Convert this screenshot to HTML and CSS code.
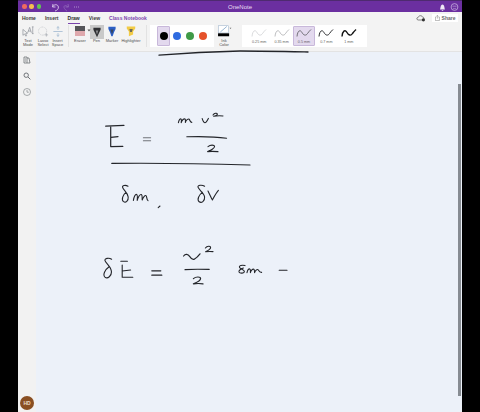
FILE: index.html
```html
<!DOCTYPE html>
<html lang="en">
<head>
  <meta charset="UTF-8" />
  <title>OneNote</title>
  <link rel="stylesheet" href="styles.css">
</head>
<body>
  <div class="window">
    <div class="titlebar">
      <div class="lights"><i class="red"></i><i class="yellow"></i><i class="green"></i></div>
      <svg class="undo" width="30" height="10" viewBox="0 0 30 10" fill="none" stroke="#d9c8ea" stroke-width="0.9">
        <path d="M3 2 L2.5 5 L5.5 5 M2.7 4.8 C4 2 8 2 8.4 5 C8.6 7 7 8.5 5 9"/>
        <path d="M18 5 C16 3 13.6 3.4 14 5.4 C14.4 7 16 8.4 17 9 M18 2 L18.5 5 L15.6 5" stroke="#8d63b8"/>
        <path d="M24 5 h1 M26 5 h1 M28 5 h1" stroke="#b79ad3"/>
      </svg>
      <div class="app-name">OneNote</div>
      <svg class="title-icons" width="24" height="10" viewBox="0 0 24 10">
        <path d="M3 7.5 C3.6 6.6 3.4 2.5 5.5 2.5 C7.6 2.5 7.4 6.6 8 7.5 Z M4.8 8 h1.4 v0.8 h-1.4 Z" fill="#eee6f5"/>
        <circle cx="17.5" cy="5" r="3.4" fill="none" stroke="#c7aee0" stroke-width="0.8"/>
        <path d="M15.5 4.2 h4 M16 6 C16.6 6.8 18.4 6.8 19 6" fill="none" stroke="#c7aee0" stroke-width="0.6"/>
      </svg>
    </div>

    <div class="ribbon">
      <div class="tabs">
        <span class="tab">Home</span>
        <span class="tab">Insert</span>
        <span class="tab active">Draw</span>
        <span class="tab">View</span>
        <span class="tab notebook">Class Notebook</span>
        <svg class="cloud" width="10" height="8" viewBox="0 0 10 8">
          <path d="M2.2 6 C0.4 6 0.4 3.4 2.2 3.4 C2.6 1.4 5.8 1 6.4 3 C8 2.8 8.6 5 7 6 Z" fill="none" stroke="#555" stroke-width="0.7"/>
          <circle cx="7.4" cy="5.8" r="1.6" fill="#333"/>
        </svg>
        <span class="share">
          <svg width="5" height="6" viewBox="0 0 5 6" fill="none" stroke="#777" stroke-width="0.5"><path d="M1.2 2 H0.4 V5.6 H4.4 V2 H3.6 M2.4 3.6 V0.4 M1.4 1.3 L2.4 0.4 L3.4 1.3"/></svg>
          Share
        </span>
      </div>

      <div class="tools">
        <div class="tool w-text">
          <svg width="12" height="11" viewBox="0 0 14 13" fill="none" stroke="#8a8f96" stroke-width="0.8">
            <path d="M1 4 L1 11 L3 9.4 L4.4 12 L5.4 11.4 L4.2 9 L6.4 8.6 Z"/>
            <path d="M6.6 8 L9 1.6 L11 8 M7.4 6 H10.4 M12.6 1 V9 M11.6 1 H13.6 M11.6 9 H13.6"/>
          </svg>
          <span>Text<br>Mode</span>
        </div>
        <div class="tool w-lasso">
          <svg width="12" height="11" viewBox="0 0 14 13" fill="none">
            <circle cx="6.5" cy="6" r="4.8" stroke="#b9bcc0" stroke-width="0.8" stroke-dasharray="1 0.8"/>
            <path d="M9 10.5 H13 M11 8.5 V12.5" stroke="#9aa0a6" stroke-width="0.7"/>
          </svg>
          <span>Lasso<br>Select</span>
        </div>
        <div class="tool w-space">
          <svg width="12" height="11" viewBox="0 0 14 13" fill="none" stroke="#9db6cf" stroke-width="0.9">
            <path d="M1.5 6.5 H12.5"/>
            <path d="M7 0.8 V4.6 M5.4 2.2 L7 0.8 L8.6 2.2 M7 8.4 V12.2 M5.4 10.8 L7 12.2 L8.6 10.8"/>
          </svg>
          <span>Insert<br>Space</span>
        </div>
        <div class="divider"></div>
        <div class="tool w-eraser">
          <div class="eraser-wrap">
            <div class="eraser"></div>
            <svg class="caret" width="4" height="3" viewBox="0 0 4 3"><path d="M0.5 0.5 H3.5 L2 2.5 Z" fill="#555"/></svg>
          </div>
          <span>Eraser</span>
        </div>
        <div class="tool w-pen">
          <div class="pen-box">
            <svg width="8" height="11" viewBox="0 0 10 13"><path d="M0.5 0.5 H9.5 V3 L7.5 7 L5 12.5 L2.5 7 L0.5 3 Z" fill="#2f3033"/><path d="M3.4 4 H6.6 L5 9 Z" fill="#8a8b8e"/></svg>
          </div>
          <span>Pen</span>
        </div>
        <div class="tool w-marker">
          <svg width="8" height="11" viewBox="0 0 10 13"><path d="M0.5 0.5 H9.5 V3.4 L7.5 7.4 L5.8 12.5 H4.2 L2.5 7.4 L0.5 3.4 Z" fill="#2c5fc4"/><path d="M3 4 H7 L5 10 Z" fill="#39475e"/></svg>
          <span>Marker</span>
        </div>
        <div class="tool w-highlighter">
          <svg width="10" height="11" viewBox="0 0 11 13"><path d="M0.5 0.5 H10.5 V3 L8 6.6 V10 L3 12 V6.6 L0.5 3 Z" fill="#f2cb45"/><path d="M3.6 3.6 H7.6 L6.6 7 H4.4 Z" fill="#6d6a5a"/></svg>
          <span>Highlighter</span>
        </div>
        <div class="divider"></div>
        <div class="panel colors">
          <div class="swatch selected"><i class="black"></i></div>
          <div class="swatch"><i class="blue"></i></div>
          <div class="swatch"><i class="dark-green"></i></div>
          <div class="swatch"><i class="orange"></i></div>
        </div>
        <div class="tool w-ink">
          <svg width="15" height="12" viewBox="0 0 15 13" fill="none">
            <rect x="1" y="0.8" width="11" height="7.8" fill="#fff" stroke="#9db4cc" stroke-width="0.6"/>
            <path d="M3 7.6 L10 1.6" stroke="#8fb0d0" stroke-width="1"/>
            <rect x="0.5" y="9" width="12" height="3.2" fill="#000"/>
            <path d="M13 3 H15 L14 4.2 Z" fill="#666"/>
          </svg>
          <span>Ink<br>Color</span>
        </div>
        <div class="panel widths">
          <div class="width">
            <svg width="16" height="10" viewBox="0 0 16 10"><path d="M1 8.5 C1.5 3 4 1 6 4.5 C7.5 7.5 10 8 11.5 5.5 C12.6 3.8 14 2.5 15 1.5" fill="none" stroke="#b5b7ba" stroke-width="0.5"/></svg>
            <span>0.25 mm</span>
          </div>
          <div class="width">
            <svg width="16" height="10" viewBox="0 0 16 10"><path d="M1 8.5 C1.5 3 4 1 6 4.5 C7.5 7.5 10 8 11.5 5.5 C12.6 3.8 14 2.5 15 1.5" fill="none" stroke="#909296" stroke-width="0.6"/></svg>
            <span>0.35 mm</span>
          </div>
          <div class="width selected">
            <svg width="16" height="10" viewBox="0 0 16 10"><path d="M1 8.5 C1.5 3 4 1 6 4.5 C7.5 7.5 10 8 11.5 5.5 C12.6 3.8 14 2.5 15 1.5" fill="none" stroke="#55565a" stroke-width="0.8"/></svg>
            <span>0.5 mm</span>
          </div>
          <div class="width">
            <svg width="16" height="10" viewBox="0 0 16 10"><path d="M1 8.5 C1.5 3 4 1 6 4.5 C7.5 7.5 10 8 11.5 5.5 C12.6 3.8 14 2.5 15 1.5" fill="none" stroke="#2d2e31" stroke-width="1"/></svg>
            <span>0.7 mm</span>
          </div>
          <div class="width">
            <svg width="16" height="10" viewBox="0 0 16 10"><path d="M1 8.5 C1.5 3 4 1 6 4.5 C7.5 7.5 10 8 11.5 5.5 C12.6 3.8 14 2.5 15 1.5" fill="none" stroke="#111" stroke-width="1.4"/></svg>
            <span>1 mm</span>
          </div>
        </div>
      </div>
    </div>

    <div class="body">
      <div class="sidebar">
        <svg width="8" height="8" viewBox="0 0 8 8" fill="none" stroke="#6f7377" stroke-width="0.8"><path d="M1 1 H4 V7 H1 Z M4 2 H6 L7 7 H4 M2 3 H3 M2 5 H3"/></svg>
        <svg width="8" height="8" viewBox="0 0 8 8" fill="none" stroke="#6f7377" stroke-width="1"><circle cx="3.2" cy="3.2" r="2.2"/><path d="M5 5 L7.4 7.4"/></svg>
        <svg width="8" height="8" viewBox="0 0 8 8" fill="none" stroke="#85898d" stroke-width="0.7"><circle cx="4" cy="4" r="3.5"/><path d="M4 2 V4.2 H5.8"/></svg>
        <div class="avatar">HD</div>
      </div>
      <div class="canvas"></div>
    </div>

    <div class="scrollbar"></div>

    <!-- handwriting, in screenshot coordinates -->
    <svg class="ink" width="444" height="412" viewBox="18 0 444 412" fill="none" stroke="#23252a" stroke-width="1.1" stroke-linecap="round" stroke-linejoin="round">
      <path d="M159 55.2 C185 53 215 51.5 240 51 C265 51 290 51.6 308 52" stroke-width="1.3"/>

      <path d="M105.7 126.2 L124 125.4 M110.7 126.8 L110.7 146.6 L122.8 146.4 M110.8 137.4 L118 136.6" stroke-width="1.2"/>
      <path d="M143.4 137.7 H150.6 M143.4 140.8 H150.6" stroke="#70747a"/>
      <path d="M178.4 122.6 C179 119.4 180.4 118.6 181 119 C181.8 119.6 181.4 121.4 181.2 122.6 C182 119.8 184 118.4 185 119 C185.8 119.6 185.4 121.4 185.4 122.4 C186 120 188.2 118.6 189.2 119.2 C190 119.8 189.6 122 191.8 122.4"/>
      <path d="M202.2 118.6 C202.8 120.4 203.6 122.8 205 122.8 C206.4 122.8 207.4 120.4 208.4 118.4"/>
      <path d="M213 115 C214.4 113 217 112.8 217.4 114.2 C217.6 115.2 215 116 213.6 116.2 C216.4 115.8 220 115.6 223 116"/>
      <path d="M186.8 136.8 C200 136.4 215 136.6 226.6 138.2"/>
      <path d="M208 146.6 C210.4 144.6 214.4 144.8 214.6 146.4 C214.8 148 210.6 150.6 207.6 151.6 C211 151.2 215 151.4 218 151.6"/>
      <path d="M111.8 163.4 C150 163 210 163.8 250 165" stroke-width="1.2"/>

      <path d="M128 186.2 C125.4 184.6 122 185.4 122.6 187.4 C123.4 190 127.8 192.6 128.2 197 C128.6 201 125.6 203 123.6 201.6 C121 199.6 123 194.6 126 192.4"/>
      <path d="M133.4 200.4 C134 196.6 135.4 194 136.6 194.4 C137.8 194.8 137.4 198 137.2 200.4 C138 197 140 194 141.4 194.6 C142.6 195.2 142 198.4 142.2 200 C143 197.4 145 195 146 195.6 C147 196.2 146.4 199.6 148 200.6"/>
      <path d="M160 206 L158.2 207.6"/>
      <path d="M204.6 186.2 C202 184.6 197.4 185 198 187.2 C198.8 190 204 192.6 204.6 197 C205 201.2 201.4 203.4 199.2 201.8 C196.6 199.6 199 194.8 202.4 192.4"/>
      <path d="M208 191 C209.6 194 211 198 212.4 200 C214 197 216 193 218.4 190.4"/>

      <path d="M111.6 259.2 C108.8 257.4 104.4 258.4 105 260.6 C105.8 263.4 111 266.6 111.4 271.4 C111.8 276.2 107.6 279 105 277.2 C102.4 275 105 269.6 108.8 267"/>
      <path d="M120.8 261.2 H127.4 M122.2 265 V277.2 H132.8 M122.2 271 L130.6 270"/>
      <path d="M151.8 270.8 H160.8 M151.8 275.2 H161.8" stroke-width="1.2"/>
      <path d="M183.6 256 C185.4 253.6 188 254 189.6 256.4 C191 258.6 193 260 194.6 259 C196.6 257.8 198.6 255.6 200 253.8" stroke-width="1.2"/>
      <path d="M205.4 248 C207 245.8 210.6 245.8 210.6 247.6 C210.6 249 207.4 251 205.6 251.8 C208 251.4 211 251.4 213 251.6"/>
      <path d="M185 269.6 C193 269 202 269.2 209.2 269.4"/>
      <path d="M193.4 278.6 C196 276.4 200.6 276.6 200.6 278.6 C200.6 280.6 196.6 282.6 193.4 283.8 C196.6 283.4 200 283.4 203 283.8" stroke-width="1.2"/>
      <path d="M245 265.6 C242 264.6 238.6 265.6 239.6 267.4 C240.6 269.2 244.4 269.6 244.4 271.6 C244.4 273.4 240 273.8 239 272 C238.4 270.6 241 268.8 243.4 268"/>
      <path d="M247 272.6 C247.6 270 248.6 268.6 249.8 269 C250.8 269.4 250.4 271.4 250.4 272.6 C251 270.4 252.6 268.6 253.8 269.2 C254.8 269.8 254.4 271.6 254.6 272.6 C255.2 270.6 257 269 258 269.6 C259 270.2 258.6 272.4 261.6 272.4"/>
      <path d="M279.2 270.2 H287"/>
    </svg>
  </div>
</body>
</html>
```

FILE: styles.css
```css
* { box-sizing: border-box; }
html, body { margin: 0; height: 100%; }
body { background: #000; font-family: "Liberation Sans", Arial, sans-serif; overflow: hidden; }
.window { position: relative; margin-left: 18px; width: 444px; height: 412px; display: flex; flex-direction: column; background: #ecf1f9; overflow: hidden; }

.titlebar { position: relative; flex: none; height: 12px; background: #6b2fa0; border-top: 1px solid #4e2a70; display: flex; align-items: center; padding-left: 4px; }
.lights { display: flex; gap: 2.8px; }
.lights i { width: 4.5px; height: 4.5px; border-radius: 50%; }
.red { background: #ee6a5f; }
.yellow { background: #f5bd4f; }
.green { background: #61c454; }
.undo { margin-left: 9px; }
.app-name { position: absolute; left: 0; right: 0; text-align: center; color: #eadff3; font-size: 6px; }
.title-icons { margin-left: auto; margin-right: 1px; }

.ribbon { flex: none; height: 40px; background: #f3f3f3; border-bottom: 1px solid #e3e3e3; }
.tabs { height: 12px; display: flex; align-items: center; padding-left: 4px; font-size: 5px; color: #3c3c3c; }
.tab { position: relative; margin-right: 9px; font-weight: 700; }
.tab.active { color: #2c2c2c; }
.tab.active::after { content: ""; position: absolute; left: 0; right: 0; top: 8px; height: 1px; background: #7a45ad; }
.tab.notebook { color: #7a45ad; }
.cloud { margin-left: auto; margin-right: 6px; }
.share { display: flex; align-items: center; gap: 2px; height: 8px; padding: 0 2.5px; margin-right: 4px; background: #fff; color: #6a6a6a; font-size: 5px; font-weight: 700; }

.tools { display: flex; height: 27px; padding-left: 2px; }
.tool { flex: none; display: flex; flex-direction: column; align-items: center; padding-top: 2px; gap: 2px; font-size: 4px; line-height: 4.4px; color: #4d4d4d; text-align: center; }
.tool span { white-space: nowrap; }
.tool svg { flex: none; }
.w-text { width: 16px; }
.w-lasso { width: 14px; }
.w-space { width: 15px; }
.w-eraser { width: 16px; }
.w-pen { width: 17px; }
.w-marker { width: 14px; }
.w-highlighter { width: 24px; }
.w-ink { width: 20px; padding-top: 1px; }
.divider { flex: none; width: 1px; height: 22px; margin: 1px 3px 0; background: #e2e2e2; }
.eraser-wrap { position: relative; height: 11px; }
.eraser { width: 10px; height: 10px; background: linear-gradient(#55565a 45%, #dfa9ad 55%); }
.caret { position: absolute; left: 12px; top: 3px; }
.pen-box { display: flex; justify-content: center; align-items: center; width: 14px; height: 14px; margin: -1px 0 -2px; background: #c9c9c9; }

.panel { flex: none; display: flex; height: 22px; background: #fff; margin-top: 1px; }
.colors { width: 64px; padding-left: 7px; }
.swatch { width: 13px; height: 20px; margin-top: 1px; display: flex; align-items: center; justify-content: center; }
.swatch.selected { background: #e3d9ee; border: 1px solid #c8b8da; border-radius: 1px; }
.swatch i { width: 8px; height: 8px; border-radius: 50%; }
.black { background: #000; }
.blue { background: #2f6be0; }
.dark-green { background: #3f9a47; }
.orange { background: #e5522a; }
.widths { width: 125px; padding-left: 6px; margin-left: 8px; }
.width { flex: none; width: 22.4px; height: 20px; margin-top: 1px; display: flex; flex-direction: column; align-items: center; padding-top: 2px; font-size: 3.7px; line-height: 4px; color: #666; gap: 2px; }
.width.selected { background: #e3d9ee; border: 1px solid #c8b8da; border-radius: 1px; padding-top: 1px; }

.body { flex: 1; display: flex; min-height: 0; }
.sidebar { flex: none; width: 18px; display: flex; flex-direction: column; align-items: center; padding-top: 4px; gap: 8px; background: #f2f2f2; }
.avatar { margin-top: auto; margin-bottom: 2px; width: 14px; height: 14px; border-radius: 50%; background: #8a4f22; color: #e9d9c8; font-size: 5px; font-weight: 700; line-height: 14px; text-align: center; }
.canvas { flex: 1; background: #ecf1f9; }

.scrollbar { position: absolute; left: 440px; top: 84px; width: 3px; height: 312px; background: #878c93; }
.ink { position: absolute; left: 0; top: 0; pointer-events: none; filter: blur(0.25px); }
```
